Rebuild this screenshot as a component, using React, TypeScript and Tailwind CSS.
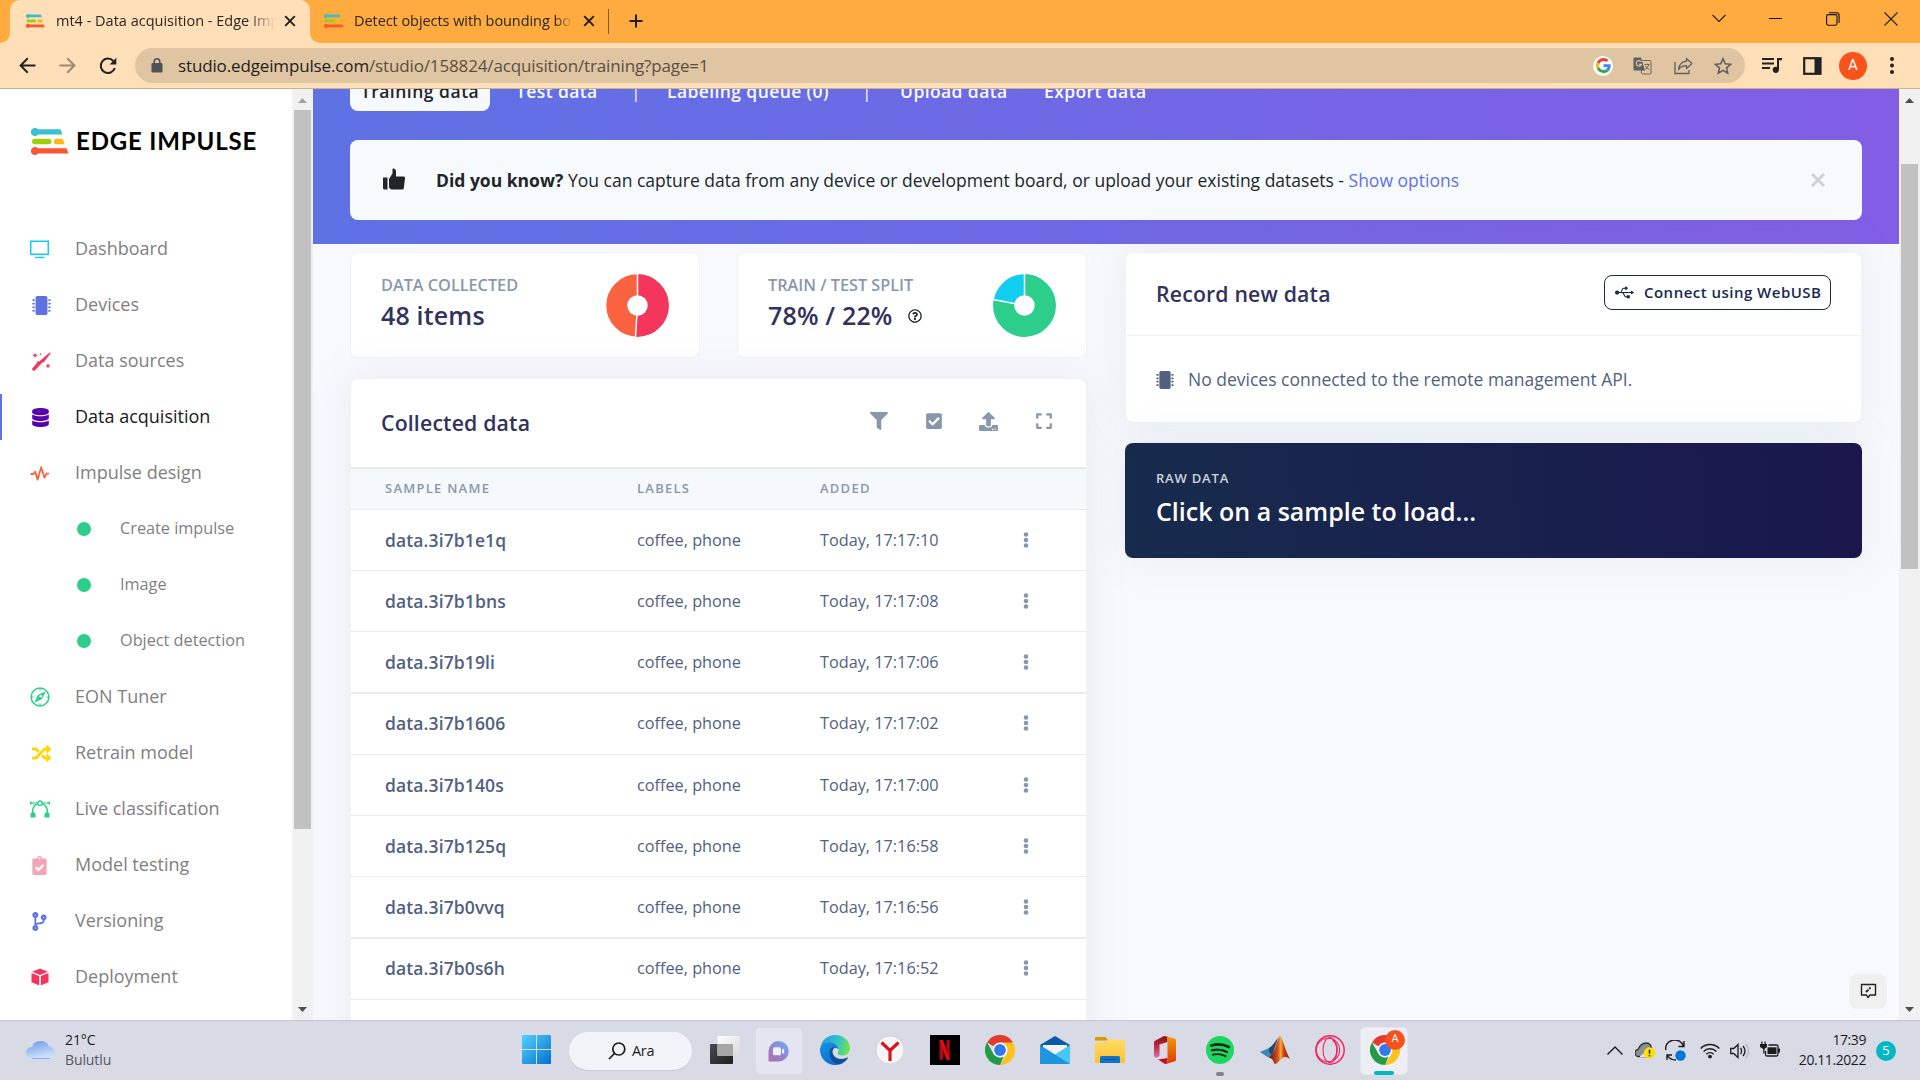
import type { ReactNode } from "react";
import {
  FaCheckSquare,
  FaClipboardCheck,
  FaCodeBranch,
  FaDatabase,
  FaExpand,
  FaFilter,
  FaMicrochip,
  FaRandom,
  FaRegQuestionCircle,
  FaUpload,
  FaUsb,
} from "react-icons/fa";

/* ---------- Edge Impulse mark ---------- */
function EdgeMark({ className }: { className: string }) {
  return (
    <svg viewBox="0 0 38 27" preserveAspectRatio="none" className={className}>
      <path d="M4 0a4 4 0 0 1 3 1.200h22.500l2 5.300H7A4 4 0 1 1 4 0z" fill="#3abed1" />
      <rect x="1" y="10.700" width="19.500" height="5.600" rx="2.800" fill="#a0cf0a" />
      <path d="M25.500 10.700h6l2.300 5.600h-8.300a2.800 2.800 0 0 1 0-5.600z" fill="#fdb90f" />
      <path d="M4 19a4 4 0 0 1 3 1.300h28.500l2 5.300H7A4 4 0 1 1 4 19z" fill="#fc5630" />
    </svg>
  );
}

/* ---------- Sidebar icons ---------- */
const TvIcon = () => (
  <svg width="20" height="20" viewBox="0 0 20 20" fill="none" stroke="#11cdef">
    <rect x="0.750" y="2.250" width="17.500" height="13" strokeWidth="1.500" />
    <path d="M5 18.500h9.500" strokeWidth="1.400" />
  </svg>
);
const PulseIcon = () => (
  <svg width="20" height="16" viewBox="0 0 20 16" fill="none" stroke="#fb6340" strokeWidth="1.800" strokeLinejoin="round">
    <path d="M0.500 9h3l1.700-2.300 2.300 8 3.700-12.500 3.300 10.500 2-4h2.500" />
  </svg>
);
const WandIcon = () => (
  <svg className="ml-[2px]" width="19" height="19" viewBox="0 0 19 19" fill="#f5365c">
    <path d="M18 0.300l0.800 0.800-7 9.200-1.400 0.300L3 18.300a1.700 1.700 0 0 1-2.400-2.400l4.300-5 0.800-1.800 1.500 0.300z" />
    <path d="M3 0.800l0.800 1.800 1.800 0.800-1.800 0.800L3 6 2.200 4.200 0.400 3.400l1.800-0.800zM8.500 0.800l0.400 1 1 0.400-1 0.400-0.400 1-0.400-1-1-0.400 1-0.400zM16 11.300l0.800 1.800 1.800 0.800-1.800 0.800-0.800 1.800-0.800-1.800-1.800-0.800 1.800-0.800z" />
  </svg>
);
const BezierIcon = () => (
  <svg width="20" height="18" viewBox="0 0 20 18" fill="none" stroke="#2dce89">
    <path d="M2.500 13c0-5 2-8.500 5.500-9.500M17.500 13c0-5-2-8.500-5.500-9.500" strokeWidth="1.500" />
    <path d="M2 3h5.500M12.500 3H18" strokeWidth="1.200" />
    <circle cx="10" cy="3.200" r="2.200" strokeWidth="1.300" />
    <path d="M0 1.200l3 1.800L0 4.800zM20 1.200L17 3l3 1.800zM0.500 13.500l2.500-1.500 2.500 1.500v4h-5zM14.500 13.500L17 12l2.500 1.500v4h-5z" fill="#2dce89" stroke="none" />
  </svg>
);
const CompassIcon = () => (
  <svg width="20" height="20" viewBox="0 0 20 20" fill="none" stroke="#2dce89">
    <circle cx="10" cy="10" r="8.900" strokeWidth="1.500" />
    <path d="M10 1.500v2M10 16.500v2M1.500 10h2M16.500 10h2" strokeWidth="1.200" />
    <path d="M15 5l-3.200 6.800L5 15l3.200-6.800z" fill="#2dce89" strokeWidth="0.800" />
    <circle cx="10.800" cy="9.200" r="1.300" fill="white" stroke="none" />
  </svg>
);
const BoxIcon = () => (
  <svg className="ml-px" width="18" height="18" viewBox="0 0 18 18" fill="#f5365c">
    <path d="M9 0.500l8 3.200-8 3.200-8-3.200z" />
    <path d="M0.500 5l7.700 3v9.500L0.500 14.200zM17.500 5L9.800 8v9.500l7.700-3.300z" />
  </svg>
);
function Dot() {
  return <span className="h-[14px] w-[14px] rounded-full bg-[#2dce89]" />;
}

type Item = { label: string; icon: ReactNode; sub?: boolean; active?: boolean };
const items: Item[] = [
  { label: "Dashboard", icon: <TvIcon /> },
  { label: "Devices", icon: <FaMicrochip className="ml-[2px] size-[19px] text-[#5e72e4]" /> },
  { label: "Data sources", icon: <WandIcon /> },
  { label: "Data acquisition", icon: <FaDatabase className="ml-px size-[19px] text-[#5603ad]" />, active: true },
  { label: "Impulse design", icon: <PulseIcon /> },
  { label: "Create impulse", icon: <Dot />, sub: true },
  { label: "Image", icon: <Dot />, sub: true },
  { label: "Object detection", icon: <Dot />, sub: true },
  { label: "EON Tuner", icon: <CompassIcon /> },
  { label: "Retrain model", icon: <FaRandom className="ml-[2px] size-[19px] text-[#ffd600]" /> },
  { label: "Live classification", icon: <BezierIcon /> },
  { label: "Model testing", icon: <FaClipboardCheck className="size-[19px] text-[#f3a4b5]" /> },
  { label: "Versioning", icon: <FaCodeBranch className="size-[19px] text-[#5e72e4]" /> },
  { label: "Deployment", icon: <BoxIcon /> },
];

function Sidebar() {
  return (
    <aside className="flex h-full w-[292px] shrink-0 flex-col overflow-hidden bg-white">
      <div className="mt-[39px] flex h-[27px] items-center pl-[31px]">
        <EdgeMark className="h-[27px] w-[38px]" />
        <span className="ml-[7px] pb-[2px] font-['Lato',sans-serif] text-[24px] leading-none font-bold tracking-[0.850px] text-black">
          EDGE IMPULSE
        </span>
      </div>
      <nav className="mt-[66px] flex flex-col">
        {items.map((it) => (
          <div key={it.label} className="flex h-14 items-center">
            <span className={it.active ? "h-[46px] w-[2px] bg-[#5e72e4]" : "h-[46px] w-[2px]"} />
            {it.sub ? (
              <>
                <span className="ml-[75px] flex w-[43px] items-center">{it.icon}</span>
                <span className="pb-px text-[16.250px] text-[#7f7f7f]">{it.label}</span>
              </>
            ) : (
              <>
                <span className="ml-[28px] flex w-[45px] items-center">{it.icon}</span>
                <span className={it.active ? "pb-px text-[18px] text-[#191919]" : "pb-px text-[18px] text-[#7f7f7f]"}>
                  {it.label}
                </span>
              </>
            )}
          </div>
        ))}
      </nav>
    </aside>
  );
}

const Arrow = ({ up, color }: { up?: boolean; color: string }) => (
  <svg width="9" height="5" viewBox="0 0 9 5" fill={color}>
    <path d={up ? "M0 5L4.500 0 9 5z" : "M0 0l4.500 5L9 0z"} />
  </svg>
);

function SidebarScroll() {
  return (
    <div className="flex h-full w-[21px] shrink-0 flex-col items-center bg-[#f1f1f1] pr-px">
      <div className="flex h-[21px] items-center pt-[2px]"><Arrow up color="#a3a3a3" /></div>
      <div className="h-[719px] w-[17px] bg-[#c1c1c1]" />
      <div className="flex-1" />
      <div className="flex h-[21px] items-center"><Arrow color="#505050" /></div>
    </div>
  );
}
function PageScroll() {
  return (
    <div className="flex h-full w-[21px] shrink-0 flex-col items-center bg-[#f1f1f1]">
      <div className="flex h-[21px] items-center pt-[2px]"><Arrow up color="#505050" /></div>
      <div className="mt-[54px] h-[405px] w-[17px] bg-[#c1c1c1]" />
      <div className="flex-1" />
      <div className="flex h-[21px] items-center"><Arrow color="#505050" /></div>
    </div>
  );
}

/* ---------- Browser chrome ---------- */
const TabX = () => (
  <svg width="12" height="12" viewBox="0 0 12 12" stroke="#1f1f1f" strokeWidth="1.900">
    <path d="M1.200 1.200l9.600 9.600M10.800 1.200l-9.600 9.600" />
  </svg>
);

function TabStrip() {
  return (
    <div className="flex h-[43px] items-end bg-[#ffab40] font-['Open_Sans',sans-serif] text-[14.5px] text-[#2b2622]">
      <svg width="10" height="43" viewBox="0 0 10 43"><path d="M10 33v10H0a10 10 0 0 0 10-10z" fill="#ffdfb8" /></svg>
      <div className="flex h-[43px] w-[300px] items-center rounded-t-[10px] bg-[#ffdfb8] pb-px pl-4">
        <EdgeMark className="h-[14px] w-[19px]" />
        <span className="ml-[11px] w-[219px] overflow-hidden mask-r-from-88% pb-px whitespace-nowrap">
          mt4 - Data acquisition - Edge Impulse
        </span>
        <span className="ml-[9px]"><TabX /></span>
      </div>
      <svg width="10" height="43" viewBox="0 0 10 43"><path d="M0 33v10h10a10 10 0 0 1-10-10z" fill="#ffdfb8" /></svg>
      <div className="flex h-[43px] items-center pb-px pl-1">
        <EdgeMark className="h-[14px] w-[20px]" />
        <span className="ml-[10px] w-[219px] overflow-hidden mask-r-from-92% pb-px tracking-[-0.060px] whitespace-nowrap">
          Detect objects with bounding boxes
        </span>
        <span className="ml-[10px]"><TabX /></span>
        <span className="ml-[13px] h-[25px] w-px bg-[#7a5a32]" />
        <svg className="ml-[19px]" width="16" height="16" viewBox="0 0 16 16" stroke="#1f1f1f" strokeWidth="2">
          <path d="M8 1.500v13M1.500 8h13" />
        </svg>
      </div>
      <div className="ml-auto flex h-[37px] items-center self-start">
        <svg width="14" height="9" viewBox="0 0 14 9" fill="none" stroke="#222" strokeWidth="1.100"><path d="M0.500 1l6.500 6.500L13.500 1" /></svg>
        <span className="ml-[43px] h-px w-[13px] bg-black" />
        <svg className="ml-[44px]" width="14" height="14" viewBox="0 0 14 14" fill="none" stroke="#111" strokeWidth="1.100">
          <rect x="0.600" y="2.600" width="10.400" height="10.600" rx="1.600" />
          <path d="M3 0.800h7.500a2.600 2.600 0 0 1 2.600 2.600v7.500" />
        </svg>
        <svg className="mr-[22px] ml-[44px]" width="14" height="14" viewBox="0 0 14 14" stroke="#222" strokeWidth="1.100">
          <path d="M0.500 0.500l13 13M13.500 0.500l-13 13" />
        </svg>
      </div>
    </div>
  );
}

const GoogleG = () => (
  <span className="flex size-5 items-center justify-center rounded-full bg-white">
    <svg width="15" height="15" viewBox="0 0 48 48">
      <path fill="#EA4335" d="M24 9.500c3.540 0 6.710 1.220 9.210 3.600l6.850-6.850C35.900 2.380 30.470 0 24 0 14.620 0 6.510 5.380 2.560 13.220l7.980 6.190C12.430 13.720 17.740 9.500 24 9.500z" />
      <path fill="#4285F4" d="M46.980 24.550c0-1.570-.15-3.090-.38-4.550H24v9.020h12.940c-.58 2.960-2.260 5.480-4.780 7.180l7.730 6c4.510-4.180 7.090-10.360 7.090-17.650z" />
      <path fill="#FBBC05" d="M10.530 28.590c-.48-1.450-.76-2.990-.76-4.590s.27-3.140.76-4.590l-7.980-6.190C.92 16.460 0 20.120 0 24c0 3.880.92 7.540 2.560 10.780l7.970-6.190z" />
      <path fill="#34A853" d="M24 48c6.480 0 11.930-2.130 15.890-5.810l-7.730-6c-2.150 1.450-4.920 2.300-8.160 2.300-6.260 0-11.570-4.220-13.470-9.910l-7.980 6.190C6.510 42.620 14.620 48 24 48z" />
    </svg>
  </span>
);

function Toolbar() {
  return (
    <div className="flex h-[46px] items-center border-b border-[#c9b08f] bg-[#ffdfb8] pl-[19px]">
      <svg width="17" height="17" viewBox="0 0 17 17" fill="none" stroke="#222" strokeWidth="2"><path d="M16.500 8.500H2M8.800 1.300L1.600 8.500l7.200 7.200" /></svg>
      <svg className="ml-[23px]" width="17" height="17" viewBox="0 0 17 17" fill="none" stroke="#9d8a74" strokeWidth="2"><path d="M0.500 8.500H15M8.200 1.300l7.200 7.200-7.200 7.200" /></svg>
      <svg className="ml-[23px]" width="18" height="18" viewBox="0 0 18 18" fill="none" stroke="#222" strokeWidth="2">
        <path d="M15.800 11A7.200 7.200 0 1 1 14.300 4" /><path d="M17.300 0.800v6.700h-6.700z" fill="#222" stroke="none" />
      </svg>
      <div className="ml-[18px] flex h-[35px] w-[1610px] items-center rounded-full bg-[#dfc5a2] pl-4">
        <svg width="12" height="15" viewBox="0 0 12 15"><rect x="0.500" y="5" width="11" height="9.500" rx="1.300" fill="#4f5357" /><path d="M3.200 6V3.600a2.800 2.800 0 0 1 5.600 0V6" fill="none" stroke="#4f5357" strokeWidth="1.500" /></svg>
        <span className="ml-[15px] font-['Open_Sans',sans-serif] text-[17px] tracking-[-0.140px] text-[#5a4f44]">
          <span className="text-[#242120]">studio.edgeimpulse.com</span>/studio/158824/acquisition/training?page=1
        </span>
        <div className="mr-[13px] ml-auto flex items-center">
          <GoogleG />
          <svg className="ml-5" width="19" height="18" viewBox="0 0 19 18">
            <rect x="8.500" y="3.500" width="9.500" height="13.500" rx="1" fill="none" stroke="#77695a" />
            <path d="M1.500 0.500h6.500l4 13H1.500a1 1 0 0 1-1-1v-11a1 1 0 0 1 1-1z" fill="#5f6062" />
            <path d="M8.300 5A2.700 2.700 0 1 0 8.500 7.300H6" fill="none" stroke="#dfc5a2" strokeWidth="1.200" />
            <path d="M11.500 7.500h5M14 6.500v1M15.800 7.500c-.5 2-2 4-3.800 5M12.500 9c.8 1.500 2 2.700 3.800 3.500" fill="none" stroke="#77695a" />
          </svg>
          <svg className="ml-[22px]" width="19" height="18" viewBox="0 0 19 18" fill="none" stroke="#5f6062" strokeWidth="1.300">
            <path d="M1 5v11.500h14V13" /><path d="M12.500 1.500l5.500 5-5.500 5V8.700c-4 0-6 1-8 4 .5-5 3-8 8-8.500z" strokeLinejoin="round" />
          </svg>
          <svg className="ml-[21px]" width="18" height="18" viewBox="0 0 18 18" fill="none" stroke="#5f6062" strokeWidth="1.600">
            <path d="M9 1.800l2.200 5 5.400.5-4.100 3.600 1.200 5.300L9 13.400l-4.700 2.800 1.200-5.300-4.100-3.600 5.400-.5z" />
          </svg>
        </div>
      </div>
      <svg className="ml-[17px]" width="20" height="16" viewBox="0 0 20 16" fill="#222">
        <path d="M0 0h12v2H0zM0 4.500h12v2H0zM0 9h8v2H0zM15 0h5v2.300h-3V11.500h-2z" /><circle cx="13.800" cy="11.800" r="3.100" />
      </svg>
      <svg className="ml-[21px]" width="19" height="18" viewBox="0 0 19 18"><rect x="1.200" y="1.200" width="16.300" height="15.600" fill="none" stroke="#222" strokeWidth="2.200" /><path d="M11.500 1H18v16h-6.500z" fill="#222" /></svg>
      <span className="ml-[17px] flex size-7 items-center justify-center rounded-full bg-[#fa541c] font-['Roboto',sans-serif] text-[15px] text-white">A</span>
      <svg className="ml-[23px]" width="4" height="17" viewBox="0 0 4 17" fill="#222"><circle cx="2" cy="2" r="2" /><circle cx="2" cy="8.500" r="2" /><circle cx="2" cy="15" r="2" /></svg>
    </div>
  );
}

/* ---------- Main area ---------- */
function Donut({ split, a, b }: { split: number; a: string; b: string }) {
  const r = 20.5;
  const ang = split * 2 * Math.PI;
  const x = 31.5 + 32 * Math.sin(ang);
  const y = 31.5 - 32 * Math.cos(ang);
  const c = 2 * Math.PI * r;
  return (
    <svg width="63" height="63" viewBox="0 0 63 63" fill="none">
      <circle cx="31.500" cy="31.500" r={r} stroke={b} strokeWidth="21.500" />
      <circle cx="31.500" cy="31.500" r={r} stroke={a} strokeWidth="21.500" strokeDasharray={`${c * split} ${c}`} transform="rotate(-90 31.500 31.500)" />
      <path d={`M31.500 31.500V0M31.500 31.500L${x} ${y}`} stroke="white" strokeWidth="1.500" />
      <circle cx="31.500" cy="31.500" r="10.200" fill="white" />
    </svg>
  );
}

function Header() {
  return (
    <div className="flex h-[155px] shrink-0 flex-col overflow-hidden bg-[linear-gradient(87deg,#5e72e4_0%,#825ee4_100%)] px-[37px]">
      <div className="-mt-[17px] flex h-[39px] items-center text-[17.5px] font-semibold tracking-[0.4px] whitespace-nowrap text-[#f7fafc]">
        <span className="flex h-[39px] w-[140px] items-center justify-center rounded-b-lg bg-[#f7fafc] font-[550] tracking-[0.5px] text-[#212529]">Training data</span>
        <span className="ml-[26px] w-[82px]">Test data</span>
        <span className="ml-[33px] w-3 font-normal">|</span>
        <span className="ml-[24px] w-[163px]">Labeling queue (0)</span>
        <span className="ml-[32px] w-3 font-normal">|</span>
        <span className="ml-[26px] w-[108px]">Upload data</span>
        <span className="ml-[36px]">Export data</span>
      </div>
      <div className="mt-[29px] flex h-20 items-center rounded-lg bg-[#f7fafc] pr-[37px] pl-[33px] text-[17.5px] text-[#212529]">
        <svg className="mb-[3px]" width="22" height="22" viewBox="0 0 22 22" fill="#212529">
          <path d="M0 9.500h4.500v12H1.500A1.500 1.500 0 0 1 0 20zM6 11L9.500 5.500V1.500C9.500-0.500 13 0.500 13 3.500V8.500h7.500A1.500 1.500 0 0 1 22 10.200l-1.200 10.100a1.500 1.500 0 0 1-1.500 1.200H8L6 19.500z" />
        </svg>
        <span className="ml-[31px] w-[127px] font-bold whitespace-nowrap">Did you know?</span>
        <span className="ml-[5px]">
          You can capture data from any device or development board, or upload your existing datasets -{" "}
          <span className="text-[#5e72e4]">Show options</span>
        </span>
        <svg className="ml-auto" width="14" height="14" viewBox="0 0 14 14" stroke="#cbd0d9" strokeWidth="2.800"><path d="M1 1l12 12M13 1L1 13" /></svg>
      </div>
    </div>
  );
}

function Stat({ label, value, children, help }: { label: string; value: string; children: ReactNode; help?: boolean }) {
  return (
    <div className="flex h-[106px] items-center justify-between rounded-lg border border-black/5 bg-white pr-[30px] pl-[30px]">
      <div className="flex flex-col pb-[3px]">
        <span className="text-[16.250px] leading-6 font-semibold text-[#8898aa]">{label}</span>
        <span className="-mt-px flex items-center text-[25px] leading-[38px] font-[550] tracking-[0.170px] text-[#32325d]">
          {value}
          {help && <FaRegQuestionCircle className="mt-[2px] ml-[15px] size-[14px] text-[#212529]" />}
        </span>
      </div>
      {children}
    </div>
  );
}

const rows = [
  ["data.3i7b1e1q", "17:17:10"],
  ["data.3i7b1bns", "17:17:08"],
  ["data.3i7b19li", "17:17:06"],
  ["data.3i7b1606", "17:17:02"],
  ["data.3i7b140s", "17:17:00"],
  ["data.3i7b125q", "17:16:58"],
  ["data.3i7b0vvq", "17:16:56"],
  ["data.3i7b0s6h", "17:16:52"],
];

function CollectedData() {
  return (
    <section className="mt-5 flex h-[720px] shrink-0 flex-col rounded-lg border border-black/5 bg-white shadow-[0_0_40px_0_rgba(136,152,170,0.15)]">
      <div className="flex h-[88px] items-center pr-[33px] pl-[30px]">
        <h2 className="text-[21.250px] font-[550] tracking-[0.170px] text-[#32325d]">Collected data</h2>
        <div className="ml-auto flex items-center pb-[4px] text-[#8898aa]">
          <FaFilter className="size-[18px]" />
          <FaCheckSquare className="ml-[37px] size-[18px]" />
          <FaUpload className="ml-[36px] size-[19px]" />
          <FaExpand className="ml-[37px] size-[18px]" />
        </div>
      </div>
      <div className="grid h-[43px] grid-cols-[252px_183px_1fr_77px] items-center border-t-2 border-b border-[#e9ecef] bg-[#f6f9fc] pl-[34px] text-[13px] font-semibold tracking-[1.250px] text-[#8898aa]">
        <span>SAMPLE NAME</span>
        <span>LABELS</span>
        <span>ADDED</span>
      </div>
      {rows.map(([name, time], i) => (
        <div
          key={name}
          className={
            i === 2 || i === 6
              ? "grid h-[62px] grid-cols-[252px_183px_1fr_63px] items-center border-b-2 border-[#e9ecef] pl-[34px] text-[16.250px] text-[#525f7f]"
              : i === 3 || i === 7
                ? "grid h-[61px] grid-cols-[252px_183px_1fr_63px] items-center border-b border-[#e9ecef] pb-[2px] pl-[34px] text-[16.250px] text-[#525f7f]"
                : "grid h-[61px] grid-cols-[252px_183px_1fr_63px] items-center border-b border-[#e9ecef] pl-[34px] text-[16.250px] text-[#525f7f]"
          }
        >
          <span className="text-[17.5px] font-[570] tracking-[0.120px]">{name}</span>
          <span>coffee, phone</span>
          <span>Today, {time}</span>
          <svg width="6" height="16" viewBox="0 0 6 16" fill="#8898aa"><circle cx="3" cy="2.500" r="2.300" /><circle cx="3" cy="8" r="2.300" /><circle cx="3" cy="13.500" r="2.300" /></svg>
        </div>
      ))}
    </section>
  );
}

function Main() {
  return (
    <main className="flex h-full w-[1586px] flex-col overflow-hidden bg-[#f8f9fe]">
      <Header />
      <div className="flex gap-[38px] pt-2 pl-[37px]">
        <div className="flex w-[737px] flex-col">
          <div className="grid grid-cols-2 gap-[37px]">
            <Stat label="DATA COLLECTED" value="48 items">
              <Donut split={0.51} a="#f5365c" b="#fb6340" />
            </Stat>
            <Stat label="TRAIN / TEST SPLIT" value="78% / 22%" help>
              <Donut split={0.78} a="#2dce89" b="#11cdef" />
            </Stat>
          </div>
          <CollectedData />
        </div>
        <div className="flex w-[737px] flex-col">
          <section className="h-[171px] rounded-lg border border-black/5 bg-white shadow-[0_0_40px_0_rgba(136,152,170,0.15)]">
            <div className="flex h-[83px] items-center border-b border-black/5 pr-[30px] pb-px pl-[30px]">
              <h2 className="text-[21.250px] font-[550] tracking-[0.170px] text-[#32325d]">Record new data</h2>
              <button className="mb-[2px] ml-auto flex h-[35px] w-[227px] items-center rounded-[8px] border border-[#172b4d] pl-[10px] text-[15px] font-[550] tracking-[0.480px] whitespace-nowrap text-[#172b4d]">
                <FaUsb className="size-[19px]" />
                <span className="ml-[10px]">Connect using WebUSB</span>
              </button>
            </div>
            <div className="flex h-[88px] items-center pb-px pl-[30px] text-[17.5px] text-[#525f7f]">
              <FaMicrochip className="size-[18px]" />
              <span className="ml-[14px]">No devices connected to the remote management API.</span>
            </div>
          </section>
          <section className="mt-5 flex h-[115px] flex-col rounded-lg bg-[linear-gradient(87deg,#172b4d_0%,#1a174d_100%)] pt-[25px] pl-[31px] text-white shadow-[0_0_40px_0_rgba(136,152,170,0.15)]">
            <span className="text-[13px] leading-5 font-semibold tracking-[0.8px] text-[#ced4da]">RAW DATA</span>
            <span className="mt-[5px] text-[25px] leading-[36px] font-semibold">Click on a sample to load...</span>
          </section>
          <div className="mt-[416px] mr-[-25px] flex justify-end">
            <span className="flex h-[35px] w-[38px] items-center justify-center rounded-lg bg-[#f0f0f0]">
              <svg width="17" height="17" viewBox="0 0 17 17" fill="none" stroke="#222" strokeWidth="1.400">
                <path d="M1.500 1.500h14v10.500H10l-2 2.500L6.500 12h-5z" strokeLinejoin="round" />
                <path d="M6 9l4.500-4.500" strokeWidth="1.800" strokeDasharray="3.500 1" />
              </svg>
            </span>
          </div>
        </div>
      </div>
    </main>
  );
}

/* ---------- Taskbar ---------- */
const ChromeIcon = () => (
  <svg width="30" height="30" viewBox="0 0 30 30">
    <path d="M15 15L2 7.500A15 15 0 0 1 28 7.500z" fill="#e33b2e" />
    <path d="M15 7.500h13A15 15 0 0 1 15 30l6.500-11.250z" fill="#fcc31e" />
    <path d="M15 30A15 15 0 0 1 2 7.500l6.500 11.250 6.500 3.750 3.500-.8z" fill="#249a48" />
    <circle cx="15" cy="15" r="7.500" fill="white" />
    <circle cx="15" cy="15" r="5.900" fill="#3079f0" />
  </svg>
);

const WindowsIcon = () => (
  <svg width="29" height="29" viewBox="0 0 29 29">
    <defs><linearGradient id="win" x1="0" y1="0" x2="29" y2="29" gradientUnits="userSpaceOnUse"><stop stopColor="#54d1fc" /><stop offset="1" stopColor="#0370cf" /></linearGradient></defs>
    <path fill="url(#win)" d="M1 0h13v14H0V1a1 1 0 0 1 1-1zM15 0h13a1 1 0 0 1 1 1v13H15zM0 15h14v14H1a1 1 0 0 1-1-1zM15 15h14v13a1 1 0 0 1-1 1H15z" />
  </svg>
);
const TaskViewIcon = () => (
  <svg width="30" height="28" viewBox="0 0 30 28">
    <defs>
      <linearGradient id="tv1" x1="0" y1="0" x2="1" y2="1"><stop stopColor="#4a4a4a" /><stop offset="1" stopColor="#1f1f1f" /></linearGradient>
      <linearGradient id="tv2" x1="0" y1="0" x2="1" y2="1"><stop stopColor="#ffffff" /><stop offset="1" stopColor="#d8d8d8" /></linearGradient>
    </defs>
    <rect y="8" width="23" height="20" rx="1" fill="url(#tv1)" />
    <rect x="7.500" width="22.500" height="20" rx="1" fill="url(#tv2)" />
    <rect x="7.500" y="8" width="15.500" height="12" fill="#a7a7a7" />
  </svg>
);
const ChatIcon = () => (
  <svg width="21" height="21" viewBox="0 0 21 21">
    <defs><linearGradient id="chat" x1="0" y1="21" x2="18" y2="0" gradientUnits="userSpaceOnUse"><stop stopColor="#b46fa5" /><stop offset="0.550" stopColor="#8c86d8" /><stop offset="1" stopColor="#74aaf0" /></linearGradient></defs>
    <path d="M10.500 0a10.200 10.200 0 1 1 0 20.500H1.500a1 1 0 0 1-1-1V10.500A10.200 10.200 0 0 1 10.500 0z" fill="url(#chat)" />
    <rect x="5" y="6.300" width="8" height="8" rx="1.500" fill="#eef0fb" /><path d="M14 8.800l2.200-1.500v6L14 11.800z" fill="#eef0fb" />
  </svg>
);
const EdgeIcon = () => (
  <svg width="30" height="30" viewBox="0 0 30 30">
    <defs>
      <linearGradient id="eg1" x1="2" y1="6" x2="29" y2="14" gradientUnits="userSpaceOnUse"><stop stopColor="#1f9fdd" /><stop offset="0.550" stopColor="#30c3c8" /><stop offset="1" stopColor="#6fe64a" /></linearGradient>
      <linearGradient id="eg2" x1="0" y1="10" x2="12" y2="30" gradientUnits="userSpaceOnUse"><stop stopColor="#1291dc" /><stop offset="1" stopColor="#0a6fd0" /></linearGradient>
    </defs>
    <path d="M0.500 13C1.500 5 8 0 15 0c9 0 15 6.500 15 13 0 5-4 7.500-7.500 7.500-3 0-5-1-5-2 0-.7 1.200-1.300 1.200-4C18.700 10 14 7 9.500 7 5 7 1.500 9.500.5 13z" fill="url(#eg1)" />
    <path d="M0 15C0 10 4 7 9 7c5 0 9.700 3.500 9.700 7.500C16 11.500 12 13 12 18c0 6 5 11 11 10a15 15 0 0 1-8 2C6.500 30 0 23 0 15z" fill="url(#eg2)" />
    <path d="M9.500 18c0-4 2.500-6.200 5.500-6.200-2 1.500-2.500 3-2.500 4.700 0 4.500 4 7.500 9 7.500 2.500 0 4.500-.8 5.700-1.500.6-.3 1 .2.700.7C25.500 27 21.500 29 19 29c-5.500 0-9.500-5-9.500-11z" fill="#0d4fa0" />
  </svg>
);
const YandexIcon = () => (
  <svg width="30" height="30" viewBox="0 0 30 30">
    <circle cx="15" cy="15" r="14" fill="#f6f6f6" stroke="#cfcfd2" strokeWidth="0.800" />
    <path d="M6.500 7.500L15 15.500l8.500-8M15 15v11" fill="none" stroke="#d8151c" strokeWidth="3.200" />
  </svg>
);
const NetflixIcon = () => (
  <svg width="30" height="30" viewBox="0 0 30 30">
    <rect width="30" height="30" fill="#000" />
    <path d="M9.500 5H13v19.500l-3.500.4zM16.500 5h3.300v19.900l-3.300-.4z" fill="#b00710" />
    <path d="M9.500 5H13l6.800 19.900-3.500-.4z" fill="#e50914" />
  </svg>
);
const MailIcon = () => (
  <svg width="30" height="28" viewBox="0 0 30 28">
    <path d="M0 9L15 0l15 9v6H0z" fill="#0a5aa8" />
    <path d="M3 9h24v8l-12 6-12-6z" fill="#f2f2f2" />
    <path d="M0 9l15 9.500L30 28H0z" fill="#2196e0" />
    <path d="M30 9L15 18.500 30 28z" fill="#45c8f5" />
    <path d="M0 28l15-9.500L30 28z" fill="#1b93de" />
  </svg>
);
const FolderIcon = () => (
  <svg width="30" height="28" viewBox="0 0 30 28">
    <defs><linearGradient id="fold" x1="0" y1="0" x2="0" y2="1"><stop stopColor="#ffdb68" /><stop offset="1" stopColor="#fdc22f" /></linearGradient></defs>
    <path d="M0 2a1 1 0 0 1 1-1h9.500l3 3.500H0z" fill="#d99a00" /><path d="M0 6h9.500L13 3.500h16a1 1 0 0 1 1 1V26a1 1 0 0 1-1 1H0z" fill="url(#fold)" />
    <path d="M5 27v-5.500A1.500 1.500 0 0 1 6.500 20h17a1.500 1.500 0 0 1 1.500 1.500V27z" fill="#0f74c8" /><path d="M9 23.500h12" stroke="#0a4f93" />
  </svg>
);
const OfficeIcon = () => (
  <svg width="23" height="28" viewBox="0 0 23 28">
    <defs>
      <linearGradient id="of1" x1="0" y1="0" x2="0" y2="1"><stop stopColor="#8f0d10" /><stop offset="0.550" stopColor="#c43246" /><stop offset="1" stopColor="#d57bb5" /></linearGradient>
      <linearGradient id="of2" x1="0" y1="0" x2="0" y2="1"><stop stopColor="#f59a10" /><stop offset="1" stopColor="#d83b01" /></linearGradient>
    </defs>
    <path d="M1 6.500a2 2 0 0 1 1-1.700L11 0l3.500.5V6L6.500 8.500V20L3 22 1 20.500z" fill="url(#of1)" />
    <path d="M5 23.500l9.500-1.500v5.500L12 28z" fill="#c2101c" />
    <path d="M12 0l9.500 2.500A2 2 0 0 1 23 4.500v19a2 2 0 0 1-1.500 2L12.500 28l2-1V1.500z" fill="url(#of2)" />
  </svg>
);
const SpotifyIcon = () => (
  <svg width="28" height="28" viewBox="0 0 28 28" fill="none" stroke="#14281b" strokeLinecap="round">
    <circle cx="14" cy="14" r="14" fill="#1ed760" stroke="none" />
    <path d="M5.500 9.500c5.500-1.600 12-1.200 17.300 1.500" strokeWidth="2.700" /><path d="M6 14.300c5-1.300 10.500-.8 15 1.700" strokeWidth="2.200" /><path d="M7 18.700c4-1 8.500-.6 12.500 1.500" strokeWidth="1.900" />
  </svg>
);
const MatlabIcon = () => (
  <svg width="30" height="28" viewBox="0 0 30 28">
    <defs><linearGradient id="mat" x1="10" y1="0" x2="28" y2="0" gradientUnits="userSpaceOnUse"><stop stopColor="#6b1a10" /><stop offset="0.450" stopColor="#d9541e" /><stop offset="0.600" stopColor="#f9b233" /><stop offset="0.750" stopColor="#d4431c" /><stop offset="1" stopColor="#9c2a12" /></linearGradient></defs>
    <path d="M0 16l9-4c3-1 6-5 8.500-9L12 20l-4.500 1z" fill="#3d86bd" /><path d="M9 12c4-2 6-7 9-10l-6 17-3-3z" fill="#24486b" />
    <path d="M8 21c3 0 5-4 7-9s3.500-11 5-12c2 0 5 14 10 23-3-2-5-3-8-.5-3 2-4 5-7.500 5.500-1-3.500-3-6-6.500-7z" fill="url(#mat)" />
  </svg>
);
const OperaIcon = () => (
  <svg width="30" height="30" viewBox="0 0 30 30" fill="none" stroke="#f4245e" strokeWidth="1.500">
    <circle cx="15" cy="15" r="14.200" /><circle cx="13" cy="15" r="11.700" strokeWidth="1.100" /><ellipse cx="15" cy="15" rx="7" ry="12.500" strokeWidth="1.100" /><path d="M17.500 5c3 2 4.500 6 4.500 10s-1.500 8-4.500 10" />
  </svg>
);

function Slot({ children, active, mark }: { children: ReactNode; active?: string; mark?: ReactNode }) {
  return (
    <span className="relative flex h-12 w-[55px] items-center justify-center">
      {active && <span className={active} />}
      <span className="relative flex -translate-y-px">{children}</span>
      {mark}
    </span>
  );
}

function Taskbar() {
  return (
    <footer className="flex h-[60px] shrink-0 items-center border-t border-[#c5c7d3] bg-[#d8dbe6] font-['Open_Sans',sans-serif] text-[#1c1c1e]">
      <div className="flex w-[509px] items-center pb-px pl-[26px]">
        <svg width="30" height="20" viewBox="0 0 30 20">
          <defs><linearGradient id="cl" x1="0" y1="0" x2="0.300" y2="1"><stop stopColor="#6d9ae8" /><stop offset="1" stopColor="#cfe2fc" /></linearGradient></defs>
          <path d="M6 19a6 6 0 0 1 0-12 9 8.500 0 0 1 17-.5A6.500 6.300 0 0 1 23.500 19z" fill="url(#cl)" /><path d="M6 18.500h18" stroke="#86acee" />
        </svg>
        <div className="ml-[9px] flex flex-col text-[14px] leading-[20px] tracking-[-0.100px]">
          <span>21°C</span>
          <span className="text-[#55575e]">Bulutlu</span>
        </div>
      </div>
      <Slot><WindowsIcon /></Slot>
      <span className="ml-[5px] flex h-[38px] w-[123px] items-center rounded-full bg-[#f3f4f9] pl-[39px] shadow-[0_1px_0_0_#c9cbd5]">
        <svg width="18" height="18" viewBox="0 0 18 18" fill="none" stroke="#1c1c1e" strokeWidth="1.700"><circle cx="10.800" cy="7" r="6" /><path d="M6.500 11.500L1 17" /></svg>
        <span className="ml-[6px] text-[14.500px] tracking-[-0.300px]">Ara</span>
      </span>
      <span className="ml-[5px] flex">
        <Slot><TaskViewIcon /></Slot>
        <Slot active="absolute inset-y-0 left-[3px] w-12 rounded-[5px] border border-[#dadde8] bg-[#e3e6f0]"><span className="-translate-x-px translate-y-[2px]"><ChatIcon /></span></Slot>
        <Slot><EdgeIcon /></Slot>
        <Slot><YandexIcon /></Slot>
        <Slot><NetflixIcon /></Slot>
        <Slot><ChromeIcon /></Slot>
        <Slot><MailIcon /></Slot>
        <Slot><FolderIcon /></Slot>
        <Slot><OfficeIcon /></Slot>
        <Slot mark={<span className="absolute -bottom-px left-[24px] h-1 w-2 rounded-full bg-[#80828b]" />}><SpotifyIcon /></Slot>
        <Slot><MatlabIcon /></Slot>
        <Slot><OperaIcon /></Slot>
        <Slot
          active="absolute inset-y-0 left-[3px] w-12 rounded-[5px] border border-[#e4e6ee] bg-[#eeeff5]"
          mark={
            <>
              <span className="absolute bottom-0 left-[17px] h-1 w-5 rounded-full bg-[#00b7c3]" />
              <span className="absolute top-[3px] left-[28px] flex size-5 items-center justify-center rounded-full bg-[#f4511e] font-['Roboto',sans-serif] text-[11px] text-white">A</span>
            </>
          }
        >
          <ChromeIcon />
        </Slot>
      </span>
      <div className="ml-auto flex items-center pr-6">
        <svg width="16" height="9" viewBox="0 0 16 9" fill="none" stroke="#1c1c1e" strokeWidth="1.400"><path d="M0.500 8.500L8 1l7.500 7.500" /></svg>
        <svg className="ml-3" width="21" height="17" viewBox="0 0 21 17">
          <path d="M4 14.500a3.500 3.500 0 0 1-1-7C5 3 8 1 11 1c3 0 5 2 5.500 5v8.500z" fill="#8d8f94" stroke="#333" strokeWidth="1.300" /><path d="M5 14L15 7v8H5z" fill="#dfe1e8" />
          <circle cx="14.500" cy="11" r="5.800" fill="#fce100" /><path d="M14.500 7.800v4M14.500 13v1.500" stroke="#222" strokeWidth="1.500" />
        </svg>
        <svg className="ml-[9px]" width="21" height="21" viewBox="0 0 21 21" fill="none" stroke="#1c1c1e" strokeWidth="1.400">
          <path d="M1 10A9 8 0 0 1 18.500 6M19 1v5.500h-5.500M2 20v-5h5M2.500 15.500c2 3.500 5 4.500 8.500 4.500" /><circle cx="15.500" cy="15.500" r="5.200" fill="#0078d7" stroke="none" />
        </svg>
        <svg className="ml-[14px]" width="20" height="16" viewBox="0 0 20 16" fill="none" stroke="#1c1c1e" strokeWidth="1.500">
          <path d="M0.700 5.500a13 13 0 0 1 18.600 0M3.600 8.500a9 9 0 0 1 12.800 0M6.400 11.300a5.200 5.200 0 0 1 7.200 0" /><circle cx="10" cy="13.600" r="1.900" fill="#1c1c1e" stroke="none" />
        </svg>
        <svg className="ml-[10px]" width="20" height="16" viewBox="0 0 20 16" fill="none" stroke="#1c1c1e" strokeWidth="1.300">
          <path d="M0.700 5.500h3L8 1.500v13L3.700 10.500h-3zM10.500 5c1.300 1.800 1.300 4.200 0 6M13 3c2.400 3 2.400 7 0 10" /><path d="M15.800 1c3.500 4 3.500 10 0 14" stroke="#b4b6bf" />
        </svg>
        <svg className="mb-[2px] ml-[10px]" width="20" height="17" viewBox="0 0 20 17" fill="#1c1c1e">
          <path d="M0 3h1.300V0.500h1.200V3h2V0.500h1.200V3H7v3L4.500 8v4.500h-1.300V8L0 6z" /><rect x="7.500" y="6.300" width="9" height="6.700" /><path d="M8.500 4h8a1.500 1.500 0 0 1 1.500 1.500v8a1.500 1.500 0 0 1-1.500 1.500H7a1.500 1.500 0 0 1-1.500-1.500V10" fill="none" stroke="#1c1c1e" strokeWidth="1.300" /><rect x="18" y="7.500" width="2" height="4" />
        </svg>
        <div className="flex w-[86px] flex-col items-end pb-[2px] text-[14px] leading-[20px] tracking-[-0.420px]">
          <span>17:39</span>
          <span>20.11.2022</span>
        </div>
        <span className="ml-[10px] flex size-5 items-center justify-center rounded-full bg-[#00b7c3] text-[13px] text-white">5</span>
      </div>
    </footer>
  );
}

export default function App() {
  return (
    <div className="flex h-[1080px] w-[1920px] flex-col overflow-hidden bg-white font-['Open_Sans',sans-serif]">
      <TabStrip />
      <Toolbar />
      <div className="flex h-[931px] shrink-0">
        <Sidebar />
        <SidebarScroll />
        <Main />
        <PageScroll />
      </div>
      <Taskbar />
    </div>
  );
}
